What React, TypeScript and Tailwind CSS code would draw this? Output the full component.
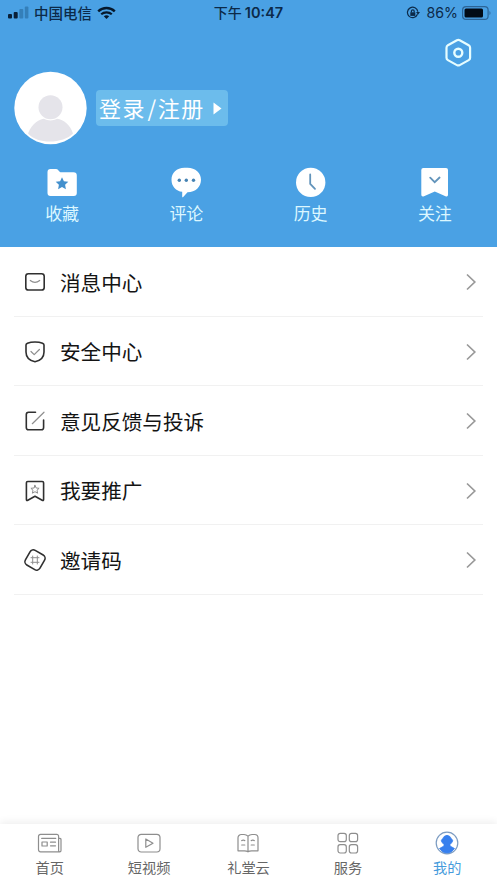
import type { ReactNode } from "react";

type Item = { label: string; icon: ReactNode };

// Shortcuts in the blue header
const SHORTCUTS: Item[] = [
  {
    label: "收藏",
    icon: (
      <svg width="32" height="32" viewBox="0 0 32 32">
        <path d="M1.500 5a3 3 0 0 1 3-3h5.700c2.300 0 2.700 3.300 5 3.300H27.500a3.300 3.300 0 0 1 3.300 3.300v17.400a3 3 0 0 1-3 3H4.500a3 3 0 0 1-3-3z" fill="#fff" />
        <path d="M16 10.200l1.900 4 4.400.6-3.200 3 .8 4.400-3.900-2.100-3.900 2.100.8-4.400-3.200-3 4.400-.6z" fill="#4390cd" />
      </svg>
    ),
  },
  {
    label: "评论",
    icon: (
      <svg width="32" height="32" viewBox="0 0 32 32">
        <path d="M14.500 0.700h3C25.500 0.700 31 5.700 31 12.700S25.500 25.200 17.500 25.200l-4.300 4.800c-.6.600-1 .4-1-.5v-4.700C6 24 1.500 19.500 1.500 12.700 1.500 5.700 6.500 0.700 14.500 0.700z" fill="#fff" />
        <g fill="#4683b3">
          <circle cx="9.300" cy="13.300" r="1.700" />
          <circle cx="16.300" cy="13.300" r="1.700" />
          <circle cx="23.500" cy="13.300" r="1.700" />
        </g>
      </svg>
    ),
  },
  {
    label: "历史",
    icon: (
      <svg width="32" height="32" viewBox="0 0 32 32">
        <circle cx="15.700" cy="15.400" r="14.700" fill="#fff" />
        <path d="M15.200 7.500v9.300l4.800 5" fill="none" stroke="#6294bb" strokeWidth="1.800" strokeLinecap="round" />
      </svg>
    ),
  },
  {
    label: "关注",
    icon: (
      <svg width="32" height="32" viewBox="0 0 32 32">
        <path d="M4.300 0.900h22.700a2 2 0 0 1 2 2v24.700c0 1.800-1 2.200-2.500 1.600l-10.700-4.600-10.800 4.600c-1.500.6-2.700.2-2.700-1.600V2.900a2 2 0 0 1 2-2z" fill="#fff" />
        <path d="M11.200 10.700l4.500 4.500 4.900-4.700" fill="none" stroke="#6294bb" strokeWidth="1.800" strokeLinecap="round" />
      </svg>
    ),
  },
];

const MENU: Item[] = [
  {
    label: "消息中心",
    icon: (
      <>
        <rect x="2.800" y="3.700" width="18.400" height="16.300" rx="2.600" />
        <path d="M7.300 10.500c3 2.300 6.400 2.300 9.400 0" stroke="#8e8e8e" strokeWidth="1.200" />
      </>
    ),
  },
  {
    label: "安全中心",
    icon: (
      <>
        <path d="M12 2c3.400 0 6 .6 7.500 1.200.9.400 1.500 1 1.500 1.900v6.800c0 5.300-4 8.700-9 9.800-5-1.100-9-4.500-9-9.800V5.100c0-.9.600-1.500 1.500-1.900C6 2.600 8.600 2 12 2z" />
        <path d="M8 11.500l3.200 3.200 5.200-5.200" stroke="#8e8e8e" strokeWidth="1.200" />
      </>
    ),
  },
  {
    label: "意见反馈与投诉",
    icon: (
      <>
        <path d="M12.500 3.300H5.600A2.300 2.300 0 0 0 3.300 5.600v12.900a2.300 2.300 0 0 0 2.300 2.300h12.700a2.300 2.300 0 0 0 2.300-2.300V11" />
        <path d="M9.300 14.700L21 3.200" stroke="#8e8e8e" strokeWidth="1.200" />
      </>
    ),
  },
  {
    label: "我要推广",
    icon: (
      <>
        <path d="M4.800 2.500h14.400c1 0 1.400.4 1.400 1.300v16.700c0 1-.6 1.300-1.400.8L12 17.200l-7.200 4.100c-.8.500-1.400.2-1.400-.8V3.800c0-.9.400-1.300 1.400-1.300z" />
        <path d="M12 6.300l1.200 2.700 2.900.3-2.100 2 .6 2.900-2.600-1.500-2.600 1.500.6-2.900-2.100-2 2.900-.3z" stroke="#8e8e8e" strokeWidth="1" />
      </>
    ),
  },
  {
    label: "邀请码",
    icon: (
      <>
        <rect x="3.600" y="3.600" width="16.800" height="16.800" rx="3.800" transform="rotate(30 12 12)" />
        <path d="M9.700 8v8M14.300 8v8M8 9.700h8M8 14.300h8" stroke="#8e8e8e" strokeWidth="1" />
      </>
    ),
  },
];

const TABS: Item[] = [
  {
    label: "首页",
    icon: (
      <>
        <path d="M22.500 20.800H3.500a2 2 0 0 1-2-2V5.400a2 2 0 0 1 2-2h16.300a1.800 1.800 0 0 1 1.800 1.800v14.300c0 1.700 2.400 1.700 2.400 0V8.500c0-.8-.6-1.300-2.400-1.300" />
        <path d="M4.700 7.400h14M5 11h5.200v4H5zM13.500 11.200h5M13.500 14.800h5" />
      </>
    ),
  },
  {
    label: "短视频",
    icon: (
      <>
        <rect x="2" y="3.300" width="22" height="17.700" rx="3.200" />
        <path d="M9.800 8v8.300l7.200-4.100z" />
      </>
    ),
  },
  {
    label: "礼堂云",
    icon: (
      <>
        <path d="M13 5.200c-1-1-2.200-1.700-4-1.700H6.300A3.300 3.300 0 0 0 3 6.800v13h6.300c1.700 0 2.700.2 3.700 1 1-.8 2-1 3.700-1H23v-13a3.300 3.300 0 0 0-3.300-3.300H17c-1.800 0-3 .7-4 1.700zv15.500" />
        <path d="M6.700 9.600l1.600-.6 1.500.6M6.700 14h3.100M16.200 9.600l1.600-.6 1.500.6M16.200 14h3.100" />
      </>
    ),
  },
  {
    label: "服务",
    icon: (
      <>
        <rect x="3" y="2.300" width="8.300" height="8.300" rx="2.200" />
        <rect x="14.300" y="2.300" width="8.300" height="8.300" rx="2.200" />
        <rect x="3" y="13.700" width="8.300" height="8.300" rx="2.200" />
        <rect x="14.300" y="13.700" width="8.300" height="8.300" rx="2.200" />
      </>
    ),
  },
  {
    label: "我的",
    icon: (
      <>
        <circle cx="13" cy="12" r="10.800" stroke="#7c9cc2" />
        <path
          d="M13 4.500C15.300 4.500 16.500 5.700 17 7.500C18.500 8.500 19 9.500 18.500 10.500C18 11.500 17 12.500 16 13.500V15L20.500 17.500Q17.500 22 13 22Q8.500 22 5.500 17.500L10 15V13.500C9 12.500 8 11.500 7.500 10.500C7 9.500 7.500 8.500 9 7.500C9.500 5.700 10.700 4.500 13 4.500Z"
          fill="#367fee"
          stroke="#367fee"
          strokeWidth="0.800"
        />
      </>
    ),
  },
];

function StatusBar() {
  return (
    <div className="grid h-[26px] grid-cols-3 items-center text-[14px] leading-[24px] text-[#0c2a49]">
      <div className="flex items-center pb-[2px] pl-2">
        <svg width="21" height="13" viewBox="0 0 21 13" className="mr-[5px]">
          <rect x="0" y="8" width="4" height="4.500" rx="1" fill="#0a2038" />
          <rect x="5.700" y="6" width="4" height="6.500" rx="1" fill="#0a2038" />
          <rect x="11.300" y="3" width="4" height="9.500" rx="1" fill="#347fb9" />
          <rect x="16.800" y="0.500" width="3.600" height="12" rx="1" fill="#347fb9" />
        </svg>
        <span className="text-[14.500px] font-medium">中国电信</span>
        <svg width="19" height="14" viewBox="0 0 19 14" className="ml-[5px]" fill="none" stroke="#06182b">
          <path d="M1.200 5.300c4.700-4.400 11.900-4.400 16.600 0" strokeWidth="2.400" />
          <path d="M4.200 8.300c3-2.700 7.600-2.700 10.600 0" strokeWidth="2.200" />
          <path d="M9.500 13l-2.700-2.700c1.600-1.300 3.800-1.300 5.400 0z" fill="#06182b" stroke="none" />
        </svg>
      </div>
      <div className="pb-[2px] text-center font-medium whitespace-nowrap">
        下午<span className="ml-[3px] font-['Inter'] text-[14.500px] font-semibold">10:47</span>
      </div>
      <div className="flex items-center justify-end pr-[6px] pb-[2px]">
        <svg width="14" height="14" viewBox="0 0 14 14" className="mr-[6px]" fill="none" stroke="#0c2a49" strokeWidth="1.200">
          <path d="M11.500 8.300a5.200 5.200 0 1 1 .3-2.500" />
          <path d="M10 6h4l-2 2.700z" fill="#0c2a49" stroke="none" />
          <rect x="4.300" y="6.300" width="5" height="3.600" fill="#0c2a49" stroke="none" />
          <path d="M5.400 6.500V5.200a1.400 1.400 0 0 1 2.800 0v1.300" />
        </svg>
        <span className="font-['Inter'] text-[14.200px]">86%</span>
        <svg width="29" height="14" viewBox="0 0 29 14" className="ml-[4px]">
          <rect x="0.600" y="0.600" width="25.500" height="12.800" rx="3.500" fill="none" stroke="#2c6496" strokeWidth="1.200" />
          <rect x="2.500" y="2.500" width="18.500" height="9" rx="1.500" fill="#020b16" />
          <path d="M27.500 5c1.300.7 1.300 3.300 0 4z" fill="#2c6496" />
        </svg>
      </div>
    </div>
  );
}

export default function App() {
  return (
    <div className="flex h-[883px] w-[497px] flex-col overflow-hidden bg-white font-['Noto_Sans_CJK_SC',sans-serif]">
      <header className="h-[247px] shrink-0 bg-[#4aa1e4]">
        <StatusBar />

        {/* Settings */}
        <div className="flex justify-end pt-[12px] pr-[24px]">
          <svg width="30" height="30" viewBox="0 0 30 30" fill="none" stroke="#e6fdff">
            <path d="M13.900 2.300a3 3 0 0 1 2.800 0l9 5a2.700 2.700 0 0 1 1.400 2.400v10a2.700 2.700 0 0 1-1.400 2.400l-9 5a3 3 0 0 1-2.800 0l-9-5A2.700 2.700 0 0 1 3.500 19.700V9.700a2.700 2.700 0 0 1 1.400-2.400z" strokeWidth="2.200" />
            <circle cx="15.300" cy="14.700" r="4" strokeWidth="2.400" />
          </svg>
        </div>

        {/* Profile */}
        <div className="mt-[3px] flex items-center pl-[14px]">
          <svg width="73" height="74" viewBox="0 0 73 74">
            <circle cx="36.500" cy="37" r="36.200" fill="#fff" />
            <circle cx="36.500" cy="36.300" r="12" fill="#e5e4ea" />
            <path d="M14 62.500C18 52 26 48 30 47.800c4 2.300 9 2.300 13 0 7 1 13 6 16 14.700-9 9.500-34 12-45 0z" fill="#e5e4ea" />
          </svg>
          <button
            type="button"
            className="ml-[9px] flex h-[36px] w-[132px] items-center rounded-[4px] bg-[#6cbcec] pl-[3px] text-[22px] text-white"
          >
            <span className="pb-[2px] leading-[34px] tracking-[1.500px]">登录</span>
            <span className="mx-[1.500px] pb-[2px] leading-[34px]">/</span>
            <span className="pb-[2px] leading-[34px] tracking-[1.500px]">注册</span>
            <svg width="9" height="13" viewBox="0 0 9 13" className="ml-[8px]">
              <path d="M0.500 0.500L8.500 6.500L0.500 12.500z" fill="#fff" />
            </svg>
          </button>
        </div>

        <div className="mt-[22px] grid grid-cols-4">
          {SHORTCUTS.map((s) => (
            <div key={s.label} className="flex flex-col items-center">
              {s.icon}
              <span className="text-[17px] leading-[28px] text-[#dcf7ff]">{s.label}</span>
            </div>
          ))}
        </div>
      </header>

      <main className="flex-1 px-[14px]">
        {MENU.map((m) => (
          <div
            key={m.label}
            className="flex h-[69.500px] items-center border-b-[1.500px] border-[#f1f1f1] pt-[2px] pr-[6px] pl-[9px]"
          >
            <svg width="24" height="24" viewBox="0 0 24 24" fill="none" stroke="#303030" strokeWidth="1.600" strokeLinecap="round" strokeLinejoin="round">
              {m.icon}
            </svg>
            <span className="ml-[13px] flex-1 pb-px text-[20.600px] leading-[30px] text-[#141414]">{m.label}</span>
            <svg width="12" height="18" viewBox="0 0 12 18" fill="none" stroke="#999" strokeWidth="1.700">
              <path d="M2 1.500L9.800 9L2 16.500" />
            </svg>
          </div>
        ))}
      </main>

      <nav className="grid h-[59px] shrink-0 grid-cols-5 bg-white pt-[7px] shadow-[0_-2px_8px_rgba(0,0,0,0.07)]">
        {TABS.map((t) => (
          <div key={t.label} className={t.label === "我的" ? "flex flex-col items-center text-[#479bdc]" : "flex flex-col items-center text-[#666]"}>
            <svg width="26" height="24" viewBox="0 0 26 24" fill="none" stroke="#8e8e8e" strokeWidth="1.200" strokeLinecap="round" strokeLinejoin="round">
              {t.icon}
            </svg>
            <span className="text-[14.200px] leading-[25px]">{t.label}</span>
          </div>
        ))}
      </nav>
    </div>
  );
}
